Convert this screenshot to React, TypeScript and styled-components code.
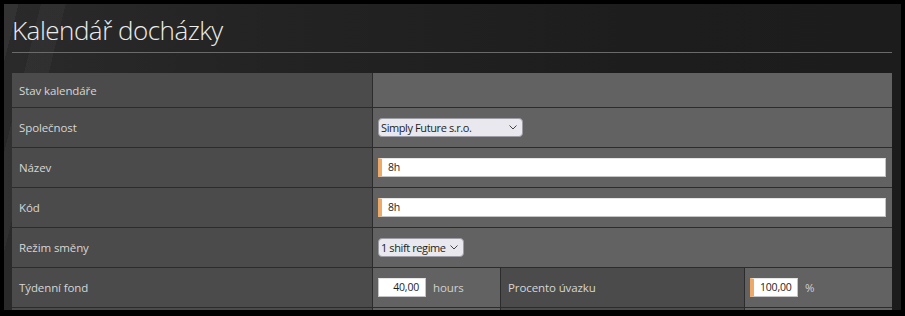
import React from "react";
import styled, { createGlobalStyle } from "styled-components";

const Global = createGlobalStyle`
  html, body { margin: 0; padding: 0; background: #000; }
  body { font-family: "Open Sans", "Noto Sans", sans-serif; }
`;

const Page = styled.div`
  width: 905px;
  height: 316px;
  box-sizing: border-box;
  padding: 4px 4px 6px 4px;
  background: #000;
  overflow: hidden;
`;

const Panel = styled.div`
  height: 100%;
  box-sizing: border-box;
  padding: 0 9px 0 8px;
  overflow: hidden;
  background:
    linear-gradient(104deg,
      rgba(255,255,255,0.045) 0px, rgba(255,255,255,0.045) 14px,
      transparent 14px, transparent 36px,
      rgba(255,255,255,0.03) 36px, rgba(255,255,255,0.03) 60px,
      transparent 60px),
    linear-gradient(90deg, #2a2a2a 0%, #232323 30%, #1d1d1d 70%, #1c1c1c 100%);
`;

const Title = styled.h1`
  margin: 0;
  padding: 10px 0 0 0;
  box-sizing: border-box;
  font-family: "Open Sans", sans-serif;
  font-weight: 300;
  font-size: 26px;
  line-height: 32px;
  color: #ececec;
  letter-spacing: -0.5px;
  border-bottom: 1px solid #6a6a6a;
  height: 49px;
`;

const Grid = styled.div`
  margin-top: 20px;
  display: grid;
  grid-template-columns: 360px 128px 244px 148px;
  grid-auto-rows: auto;
`;

const Cell = styled.div<{ $kind: "label" | "value"; $span?: number; $h: number; $first?: boolean }>`
  grid-column: span ${(p) => p.$span ?? 1};
  height: ${(p) => p.$h}px;
  box-sizing: content-box;
  border-bottom: 1px solid #2c2c2c;
  ${(p) => (p.$first ? "" : "border-left: 1px solid #2c2c2c;")}
  background: ${(p) => (p.$kind === "label" ? "#4b4b4b" : "#626262")};
  display: flex;
  align-items: center;
  gap: 7px;
  padding: 0 6px 0 ${(p) => (p.$kind === "label" ? 7 : 5)}px;
  ${(p) => (p.$first ? "padding-left: 7px;" : "")}
  font-size: 11.5px;
  letter-spacing: -0.1px;
  color: #d6d6d6;
`;

const FakeSelect = styled.div<{ $w: number }>`
  position: relative;
  width: ${(p) => p.$w}px;
  height: 19px;
  box-sizing: border-box;
  border: 1px solid #9c9ca4;
  border-radius: 4px;
  background: #e8e8ee;
  color: #1e1e1e;
  font-size: 11px;
  letter-spacing: -0.4px;
  line-height: 17px;
  padding-left: 2px;
  white-space: nowrap;
`;

const Chevron = styled.svg`
  position: absolute;
  right: 5px;
  top: 6px;
`;

const TextInput = styled.div<{ $w?: number; $accent?: boolean; $align?: "left" | "right" }>`
  ${(p) => (p.$w ? `width: ${p.$w}px;` : "flex: 1;")}
  height: 19px;
  box-sizing: border-box;
  background: #fff;
  border: 1px solid #c4c4c4;
  border-top-color: #e6e6e6;
  ${(p) => (p.$accent ? "border-left: 4px solid #eda968;" : "")}
  color: #1e1e1e;
  font-size: 10.5px;
  letter-spacing: -0.2px;
  line-height: 17px;
  text-align: ${(p) => p.$align ?? "left"};
  padding: 0 6px 0 ${(p) => (p.$accent ? 6 : 4)}px;
`;

const Unit = styled.span`
  font-size: 11.5px;
  color: #d0d0d0;
`;

const Select = ({ w, children }: { w: number; children: React.ReactNode }) => (
  <FakeSelect $w={w}>
    {children}
    <Chevron width="8" height="5" viewBox="0 0 8 5">
      <path d="M0.5 0.5 L4 4 L7.5 0.5" fill="none" stroke="#444" strokeWidth="1" />
    </Chevron>
  </FakeSelect>
);

export default function App() {
  return (
    <>
      <Global />
      <Page>
        <Panel>
          <Title>Kalendář docházky</Title>
          <Grid>
            <Cell $kind="label" $h={34} $first>Stav kalendáře</Cell>
            <Cell $kind="value" $span={3} $h={34} />

            <Cell $kind="label" $h={39} $first>Společnost</Cell>
            <Cell $kind="value" $span={3} $h={39}>
              <Select w={145}>Simply Future s.r.o.</Select>
            </Cell>

            <Cell $kind="label" $h={39} $first>Název</Cell>
            <Cell $kind="value" $span={3} $h={39}>
              <TextInput $accent>8h</TextInput>
            </Cell>

            <Cell $kind="label" $h={39} $first>Kód</Cell>
            <Cell $kind="value" $span={3} $h={39}>
              <TextInput $accent>8h</TextInput>
            </Cell>

            <Cell $kind="label" $h={39} $first>Režim směny</Cell>
            <Cell $kind="value" $span={3} $h={39}>
              <Select w={86}>1 shift regime</Select>
            </Cell>

            <Cell $kind="label" $h={39} $first>Týdenní fond</Cell>
            <Cell $kind="value" $h={39}>
              <TextInput $w={48} $align="right">40,00</TextInput>
              <Unit>hours</Unit>
            </Cell>
            <Cell $kind="label" $h={39}>Procento úvazku</Cell>
            <Cell $kind="value" $h={39}>
              <TextInput $w={48} $accent $align="right">100,00</TextInput>
              <Unit>%</Unit>
            </Cell>

            <Cell $kind="label" $h={39} $first />
            <Cell $kind="value" $h={39} />
            <Cell $kind="label" $h={39} />
            <Cell $kind="value" $h={39} />
          </Grid>
        </Panel>
      </Page>
    </>
  );
}
